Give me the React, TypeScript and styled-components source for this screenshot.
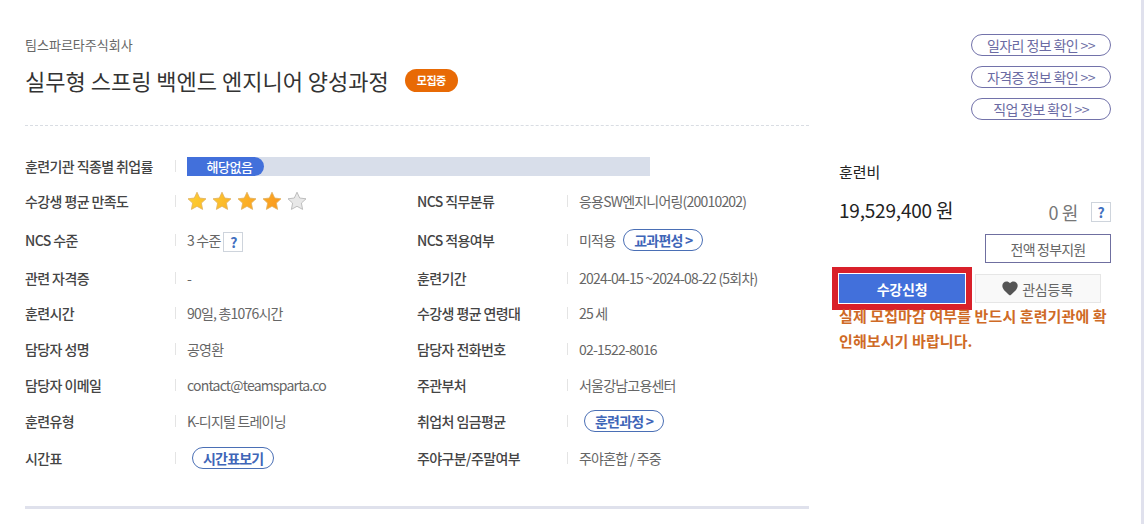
import React from 'react';
import styled, { createGlobalStyle } from 'styled-components';

const GlobalStyle = createGlobalStyle`
  html, body {
    margin: 0;
    padding: 0;
    background: #fff;
  }
  body {
    font-family: "Noto Sans CJK KR", "Noto Sans", sans-serif;
    color: #333;
  }
  * {
    box-sizing: border-box;
  }
`;

const Page = styled.div`
  width: 1144px;
  height: 524px;
  overflow: hidden;
  display: flex;
  padding-left: 25px;
  border-right: 3px solid #e0e1ed;
`;

const Main = styled.div`
  width: 784px;
  padding-top: 36px;
`;

const Company = styled.div`
  font-size: 13px;
  line-height: 18px;
  color: #666;
`;

const TitleRow = styled.div`
  display: flex;
  align-items: center;
  gap: 16px;
  margin-top: 10px;
  height: 32px;
`;

const Title = styled.h1`
  margin: 0;
  font-size: 22px;
  font-weight: 400;
  line-height: 32px;
  color: #333;
`;

const StatusBadge = styled.span`
  width: 53px;
  height: 23px;
  border-radius: 12px;
  background: #e86a05;
  color: #fff;
  font-size: 11px;
  font-weight: 700;
  display: flex;
  align-items: center;
  justify-content: center;
  letter-spacing: -0.5px;
`;

const DashedRule = styled.div`
  margin-top: 29px;
  border-top: 1px dashed #d9dde3;
`;

const RateRow = styled.div`
  margin-top: 30px;
  height: 19px;
  display: grid;
  grid-template-columns: 150px 1fr;
`;

const InfoGrid = styled.div`
  margin-top: 8px;
  display: grid;
  grid-template-columns: 150px 242px 150px 1fr;
  grid-template-rows: 36px 42px 34px 36px 36px 36px 36px 38px;
  padding-bottom: 29px;
  border-bottom: 3px solid #dfe1ec;
`;

const Label = styled.div`
  font-size: 14px;
  font-weight: 500;
  letter-spacing: -0.6px;
  color: #444;
  display: flex;
  align-items: center;
`;

const Value = styled.div`
  font-size: 14px;
  letter-spacing: -0.8px;
  color: #666;
  display: flex;
  align-items: center;

  &::before {
    content: '';
    flex: none;
    height: 12px;
    margin-right: 11px;
    border-left: 1px solid #e4e4e4;
  }
`;

const RateTrack = styled.div`
  width: 463px;
  height: 19px;
  background: #d8deea;
`;

const RateFill = styled.div`
  width: 77px;
  height: 19px;
  border-radius: 0 10px 10px 0;
  background: #4270db;
  color: #fff;
  font-size: 13px;
  font-weight: 500;
  line-height: 19px;
  text-align: center;
  letter-spacing: -0.4px;
  padding-left: 8px;
`;

const Stars = styled.div`
  display: flex;
  gap: 5px;
`;

const HelpBox = styled.span`
  width: 20px;
  height: 20px;
  margin-left: 3px;
  border: 1px solid #ced4dc;
  background: #fff;
  color: #4270c0;
  font-size: 14px;
  font-weight: 700;
  display: inline-flex;
  align-items: center;
  justify-content: center;
`;

const InlineHelp = styled(HelpBox)`
  margin-top: 4px;
`;

const LinkPill = styled.span<{ $offset: number }>`
  height: 22px;
  padding: 0 10px;
  margin-left: ${(p) => p.$offset}px;
  border: 1px solid #4a6fb5;
  border-radius: 11px;
  color: #3f66b8;
  font-size: 14px;
  font-weight: 700;
  letter-spacing: -0.8px;
  display: inline-flex;
  align-items: center;
`;

const Side = styled.aside`
  margin-left: 30px;
  width: 272px;
  padding-top: 34px;
`;

const QuickLinks = styled.div`
  display: flex;
  flex-direction: column;
  align-items: flex-end;
  gap: 10px;
`;

const QuickLink = styled.span`
  width: 140px;
  height: 22px;
  border: 1px solid #7272aa;
  border-radius: 11px;
  color: #6b6ba3;
  font-size: 14px;
  letter-spacing: -0.6px;
  display: flex;
  align-items: center;
  justify-content: center;
`;

const FeeTitle = styled.div`
  margin-top: 42px;
  font-size: 15px;
  line-height: 20px;
  color: #222;
`;

const FeeRow = styled.div`
  margin-top: 16px;
  height: 28px;
  display: flex;
  align-items: center;
`;

const FeeTotal = styled.div`
  font-size: 19px;
  letter-spacing: -0.2px;
  color: #222;
  flex: 1;
  margin-bottom: 6px;
`;

const FeeOwn = styled.div`
  font-size: 18px;
  letter-spacing: -0.4px;
  color: #777;
  margin-right: 10px;
`;

const SupportRow = styled.div`
  margin-top: 8px;
  display: flex;
  justify-content: flex-end;
`;

const SupportBox = styled.div`
  width: 126px;
  height: 29px;
  border: 1px solid #6f6fa0;
  font-size: 14px;
  letter-spacing: -0.8px;
  color: #666;
  display: flex;
  align-items: center;
  justify-content: center;
`;

const ActionRow = styled.div`
  margin-top: 11px;
  display: flex;
  gap: 10px;
`;

const ApplyButton = styled.button`
  width: 126px;
  height: 29px;
  border: 0;
  padding: 0;
  background: #4270db;
  color: #fff;
  font-family: inherit;
  font-size: 14px;
  font-weight: 700;
  letter-spacing: -0.2px;
  outline: 6px solid #d9202a;
  outline-offset: 1px;
`;

const WishButton = styled.button`
  width: 126px;
  height: 29px;
  border: 1px solid #e6e6e6;
  padding: 0 1px 0 0;
  background: #f9f9f9;
  color: #666;
  font-family: inherit;
  font-size: 14px;
  letter-spacing: -0.2px;
  display: flex;
  align-items: center;
  justify-content: center;
  gap: 4px;
`;

const Notice = styled.p`
  margin: 0;
  font-size: 15px;
  font-weight: 700;
  line-height: 25px;
  letter-spacing: 0.1px;
  color: #cf6a26;
`;

const Star: React.FC<{ id: string; from?: string; to?: string; empty?: boolean }> = ({ id, from, to, empty }) => (
  <svg width="20" height="20" viewBox="0 0 20 20">
    <defs>
      <linearGradient id={id} x1="0" y1="0" x2="1" y2="0.3">
        <stop offset="0" stopColor={from} />
        <stop offset="1" stopColor={to} />
      </linearGradient>
    </defs>
    <path
      d="M10 1.2l2.7 5.8 6.3.8-4.6 4.3 1.2 6.3L10 15.3l-5.6 3.1 1.2-6.3L1 7.8l6.3-.8z"
      fill={empty ? '#e8e8e8' : `url(#${id})`}
      stroke={empty ? '#b0b0b0' : '#e0b060'}
      strokeWidth="0.8"
      strokeLinejoin="round"
    />
  </svg>
);

const App: React.FC = () => {
  return (
    <Page>
      <GlobalStyle />
      <Main>
        <Company>팀스파르타주식회사</Company>
        <TitleRow>
          <Title>실무형 스프링 백엔드 엔지니어 양성과정</Title>
          <StatusBadge>모집중</StatusBadge>
        </TitleRow>
        <DashedRule />
        <RateRow>
          <Label>훈련기관 직종별 취업률</Label>
          <Value>
            <RateTrack>
              <RateFill>해당없음</RateFill>
            </RateTrack>
          </Value>
        </RateRow>
        <InfoGrid>
          <Label>수강생 평균 만족도</Label>
          <Value>
            <Stars>
              <Star id="s1" from="#fdd035" to="#fcc02a" />
              <Star id="s2" from="#fdc830" to="#fbb528" />
              <Star id="s3" from="#fcb92a" to="#fba824" />
              <Star id="s4" from="#fbaa25" to="#fa9a1e" />
              <Star id="s5" empty />
            </Stars>
          </Value>
          <Label>NCS 직무분류</Label>
          <Value>응용SW엔지니어링(20010202)</Value>

          <Label>NCS 수준</Label>
          <Value>
            3 수준<InlineHelp>?</InlineHelp>
          </Value>
          <Label>NCS 적용여부</Label>
          <Value>
            미적용<LinkPill $offset={8}>교과편성 &gt;</LinkPill>
          </Value>

          <Label>관련 자격증</Label>
          <Value>-</Value>
          <Label>훈련기간</Label>
          <Value>2024-04-15 ~2024-08-22 (5회차)</Value>

          <Label>훈련시간</Label>
          <Value>90일, 총1076시간</Value>
          <Label>수강생 평균 연령대</Label>
          <Value>25 세</Value>

          <Label>담당자 성명</Label>
          <Value>공영환</Value>
          <Label>담당자 전화번호</Label>
          <Value>02-1522-8016</Value>

          <Label>담당자 이메일</Label>
          <Value>contact@teamsparta.co</Value>
          <Label>주관부처</Label>
          <Value>서울강남고용센터</Value>

          <Label>훈련유형</Label>
          <Value>K-디지털 트레이닝</Value>
          <Label>취업처 임금평균</Label>
          <Value>
            <LinkPill $offset={5}>훈련과정 &gt;</LinkPill>
          </Value>

          <Label>시간표</Label>
          <Value>
            <LinkPill $offset={5}>시간표보기</LinkPill>
          </Value>
          <Label>주야구분/주말여부</Label>
          <Value>주야혼합 / 주중</Value>
        </InfoGrid>
      </Main>
      <Side>
        <QuickLinks>
          <QuickLink>일자리 정보 확인 &gt;&gt;</QuickLink>
          <QuickLink>자격증 정보 확인 &gt;&gt;</QuickLink>
          <QuickLink>직업 정보 확인 &gt;&gt;</QuickLink>
        </QuickLinks>
        <FeeTitle>훈련비</FeeTitle>
        <FeeRow>
          <FeeTotal>19,529,400 원</FeeTotal>
          <FeeOwn>0 원</FeeOwn>
          <HelpBox>?</HelpBox>
        </FeeRow>
        <SupportRow>
          <SupportBox>전액 정부지원</SupportBox>
        </SupportRow>
        <ActionRow>
          <ApplyButton>수강신청</ApplyButton>
          <WishButton>
            <svg width="16" height="15" viewBox="0 0 24 22">
              <path d="M12 21.5C5 15.6 0.5 11.6 0.5 6.8 0.5 3.2 3.3 0.5 6.8 0.5c2 0 3.9 1 5.2 2.6C13.3 1.5 15.2 0.5 17.2 0.5c3.5 0 6.3 2.7 6.3 6.3 0 4.8-4.5 8.8-11.5 14.7z" fill="#555" />
            </svg>
            관심등록
          </WishButton>
        </ActionRow>
        <Notice>실제 모집마감 여부를 반드시 훈련기관에 확인해보시기 바랍니다.</Notice>
      </Side>
    </Page>
  );
};

export default App;
